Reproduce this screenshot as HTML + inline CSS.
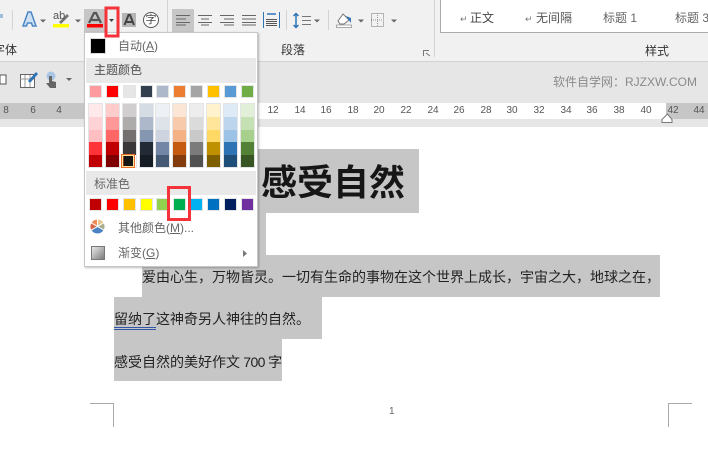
<!DOCTYPE html>
<html><head><meta charset="utf-8">
<style>
html,body{margin:0;padding:0;background:#fff}
#r{position:relative;width:708px;height:465px;overflow:hidden;background:#fff;font-family:"Liberation Sans","Noto Sans CJK SC",sans-serif;color:#333}
#r div{position:absolute;box-sizing:border-box}
.t{white-space:nowrap;line-height:16px;height:16px}
.n{font-size:10px;color:#555;line-height:12px;height:12px;top:105px;width:20px;text-align:center;font-family:"Liberation Sans",sans-serif}
.m{font-size:12px;color:#666;white-space:nowrap;line-height:16px;height:16px}
.d{font-size:14px;color:#222;white-space:nowrap;line-height:20px;height:20px}
.g{background:#c6c6c6}
svg{position:absolute;left:0;top:0}
</style></head><body><div id="r">
<div style="left:0;top:0;width:708px;height:61px;background:#f1f1f1"></div>
<div style="left:0;top:61px;width:708px;height:1px;background:#d2d2d2"></div>
<div style="left:0;top:62px;width:708px;height:65px;background:#e6e6e6"></div>
<div style="left:0;top:103px;width:708px;height:16px;background:#fff"></div>
<div class="g" style="left:0;top:103px;width:114px;height:16px"></div>
<div class="g" style="left:666px;top:103px;width:42px;height:16px"></div>
<div style="left:440px;top:0;width:268px;height:33px;background:#fff;border-left:1px solid #ababab;border-bottom:1px solid #ababab"></div>

<div class="g" style="left:84px;top:9px;width:21px;height:23px"></div>
<div class="g" style="left:172px;top:9px;width:22px;height:23px"></div>

<svg width="708" height="127" viewBox="0 0 708 127">
<g fill="none" stroke="#d4d4d4"><path d="M12.5 10V30M167.5 0V57M286.5 10V30M328.5 10V30M434.5 0V57"/></g>
<path d="M0 15H3M0 17H3" stroke="#4a86c5" fill="none"/>
<path d="M23 26L28 12H31L36 26H32.500L31.500 23H27.500L26.500 26Z" fill="#cfe0f2" stroke="#4c86c6" stroke-width="1.500"/>
<path d="M40 19.500h6l-3 3zM75 19.500h6l-3 3z" fill="#666"/>
<path d="M59 22L67 14L69 16L61 24Z" fill="#777"/><rect x="53" y="24" width="16" height="3.500" fill="#ff0"/>
<path d="M89 23L94 13H96L101 23M91.500 20H98.500" fill="none" stroke="#555" stroke-width="2.200"/><rect x="87" y="24" width="16" height="3.500" fill="#f00"/>
<rect x="122" y="13" width="14" height="14" fill="#b5b5b5"/><path d="M124.500 25L128.500 15H130L134 25M126 22H132.500" fill="none" stroke="#444" stroke-width="2"/>
<circle cx="151" cy="20" r="7.500" fill="#fff" stroke="#555"/>
<path d="M176 15.500H190M176 19H186M176 22.500H190M176 25H186" stroke="#666" fill="none"/>
<path d="M198 15.500H212M201 19H209M198 22.500H212M201 25H209" stroke="#666" fill="none"/>
<path d="M220 15.500H234M224 19H234M220 22.500H234M224 25H234" stroke="#666" fill="none"/>
<path d="M242 15.500H256M242 19H256M242 22.500H256M242 25H256" stroke="#666" fill="none"/>
<path d="M263.500 12V28M279.500 12V28" stroke="#2e75b6" fill="none"/><path d="M267 14H276" stroke="#2e75b6" stroke-width="1.500"/>
<path d="M266 19.500H277M266 21.500H277M266 23.500H277M266 25.500H277" stroke="#555"/>
<path d="M296 14V27M293.500 16L296 13.500L298.500 16M293.500 25L296 27.500L298.500 25" fill="none" stroke="#2e75b6" stroke-width="1.500"/>
<path d="M302 16.500H311M302 20.500H311M302 24.500H311" stroke="#777"/>
<path d="M314 19.500h6l-3 3z" fill="#666"/>
<path d="M338 21L343 14L349 20L344 24H340Z" fill="#fff" stroke="#777"/><path d="M346 16L351 18L351 23Z" fill="#2e75b6"/><rect x="336.500" y="25" width="15" height="2.500" fill="#fff" stroke="#888" stroke-width=".7"/>
<path d="M358 19.500h6l-3 3zM391 19.500h6l-3 3z" fill="#666"/>
<rect x="371.500" y="13.500" width="12" height="13" fill="none" stroke="#777" stroke-dasharray="1 1"/><path d="M371 20H384M377.500 13V27" stroke="#999" stroke-dasharray="1 1"/>
<path d="M423.500 56V50.500H429M426 53L430 56" stroke="#777" fill="none"/>
<rect x="0" y="75" width="6" height="9" fill="#fff" stroke="#555"/>
<rect x="20.500" y="74.500" width="14" height="13" fill="#fff" stroke="#666"/><path d="M20 79H34M25 75V87M30 75V87" stroke="#999"/><path d="M28 81L36 72L38 74L30 83Z" fill="#2e75b6"/>
<circle cx="51" cy="76" r="4.500" fill="#a9c6e6"/><path d="M49 76H52V81L56 82V88H50L46 83L49 83Z" fill="#666"/>
<path d="M66 78h6l-3 3z" fill="#666"/>
<path d="M667.500 114L662 119.500V122.500H672V119.500Z" fill="#fff" stroke="#777"/>
</svg>

<div class="t" style="left:-7px;top:42px;font-size:12px;color:#333">字体</div>
<div class="t" style="left:281px;top:42px;font-size:12px">段落</div>
<div class="t" style="left:645px;top:43px;font-size:12px">样式</div>
<div class="t" style="left:470px;top:10px;font-size:12px;color:#444">正文</div>
<div class="t" style="left:536px;top:10px;font-size:12px;color:#555">无间隔</div>
<div class="t" style="left:603px;top:10px;font-size:12px;color:#666">标题 1</div>
<div class="t" style="left:675px;top:10px;font-size:12px;color:#666">标题 3</div>
<div class="t" style="left:460px;top:11px;font-size:9px;color:#777">↵</div>
<div class="t" style="left:525px;top:11px;font-size:9px;color:#777">↵</div>
<div class="t" style="left:53px;top:8px;font-size:11px;color:#555">ab</div>
<div class="t" style="left:145.500px;top:12px;font-size:11px;color:#444">字</div>
<div class="t" style="left:553px;top:74px;font-size:12px;color:#8a8a8a">软件自学网：RJZXW.COM</div>

<div class="n" style="left:-4px">8</div><div class="n" style="left:23px">6</div><div class="n" style="left:49px">4</div>
<div class="n" style="left:263px">12</div><div class="n" style="left:290px">14</div><div class="n" style="left:316px">16</div><div class="n" style="left:343px">18</div><div class="n" style="left:369px">20</div><div class="n" style="left:396px">22</div><div class="n" style="left:423px">24</div><div class="n" style="left:449px">26</div><div class="n" style="left:476px">28</div><div class="n" style="left:502px">30</div><div class="n" style="left:529px">32</div><div class="n" style="left:556px">34</div><div class="n" style="left:582px">36</div><div class="n" style="left:609px">38</div><div class="n" style="left:636px">40</div><div class="n" style="left:663px">42</div><div class="n" style="left:689px">44</div>

<div class="g" style="left:168px;top:149px;width:251px;height:64px"></div>
<div class="g" style="left:114px;top:213px;width:152px;height:42px"></div>
<div class="g" style="left:142px;top:255px;width:518px;height:42px"></div>
<div class="g" style="left:114px;top:297px;width:208px;height:42px"></div>
<div class="g" style="left:114px;top:339px;width:168px;height:42px"></div>
<div class="t" style="left:261px;top:160px;height:46px;line-height:46px;font-size:36px;font-weight:bold;color:#161616">感受自然</div>
<div class="d" style="left:142px;top:267px">爱由心生，万物皆灵。一切有生命的事物在这个世界上成长，宇宙之大，地球之在，</div>
<div class="d" style="left:114px;top:309px">留纳了这神奇另人神往的自然。</div>
<div class="d" style="left:114px;top:352px">感受自然的美好作文<span style="letter-spacing:-.6px"> 700 </span>字</div>
<div style="left:114px;top:327px;width:42px;height:3px;border-top:1px solid #2f55a4;border-bottom:1px solid #2f55a4"></div>

<div style="left:90px;top:403px;width:24px;height:24px;border-right:1px solid #aaa;border-top:1px solid #aaa"></div>
<div style="left:668px;top:403px;width:24px;height:24px;border-left:1px solid #aaa;border-top:1px solid #aaa"></div>
<div class="t" style="left:389px;top:404px;font-size:10px;color:#666">1</div>

<div style="left:84px;top:32px;width:174px;height:235px;background:#fff;border:1px solid #c6c6c6;box-shadow:1px 1px 2px rgba(0,0,0,.25)"></div>
<div style="left:90px;top:38px;width:16px;height:16px;background:#000;border:1px solid #ddd"></div>
<div class="m" style="left:118px;top:38px">自动(<u>A</u>)</div>
<div style="left:86px;top:58px;width:170px;height:25px;background:#e9e9e9"></div>
<div class="m" style="left:94px;top:62px;font-weight:500">主题颜色</div>
<div style="left:86px;top:171px;width:170px;height:24px;background:#e9e9e9"></div>
<div class="m" style="left:94px;top:176px">标准色</div>
<div class="m" style="left:118px;top:220px">其他颜色(<u>M</u>)...</div>
<div class="m" style="left:118px;top:245px">渐变(<u>G</u>)</div>

<svg width="708" height="465" viewBox="0 0 708 465">
<defs><linearGradient id="gr" x1="0" y1="0" x2="1" y2="1"><stop offset="0" stop-color="#eee"/><stop offset="1" stop-color="#777"/></linearGradient></defs>
<g stroke="#e2e4e6" stroke-width="1">
<rect x="89.500" y="85.500" width="12" height="12" fill="#ff9a9e"/><rect x="106.500" y="85.500" width="12" height="12" fill="#f00"/><rect x="123.500" y="85.500" width="12" height="12" fill="#e7e6e6"/><rect x="140.500" y="85.500" width="12" height="12" fill="#323f4f"/><rect x="156.500" y="85.500" width="12" height="12" fill="#adb9ca"/><rect x="173.500" y="85.500" width="12" height="12" fill="#ed7d31"/><rect x="190.500" y="85.500" width="12" height="12" fill="#a5a5a5"/><rect x="207.500" y="85.500" width="12" height="12" fill="#ffc000"/><rect x="224.500" y="85.500" width="12" height="12" fill="#5b9bd5"/><rect x="241.500" y="85.500" width="12" height="12" fill="#70ad47"/>
<rect x="89.500" y="198.500" width="12" height="12" fill="#c00000"/><rect x="106.500" y="198.500" width="12" height="12" fill="#f00"/><rect x="123.500" y="198.500" width="12" height="12" fill="#ffc000"/><rect x="140.500" y="198.500" width="12" height="12" fill="#ff0"/><rect x="156.500" y="198.500" width="12" height="12" fill="#92d050"/><rect x="173.500" y="198.500" width="12" height="12" fill="#00b050"/><rect x="190.500" y="198.500" width="12" height="12" fill="#00b0f0"/><rect x="207.500" y="198.500" width="12" height="12" fill="#0070c0"/><rect x="224.500" y="198.500" width="12" height="12" fill="#002060"/><rect x="241.500" y="198.500" width="12" height="12" fill="#7030a0"/>
<rect x="88.500" y="103.500" width="14" height="64" fill="#fff"/><rect x="105.500" y="103.500" width="14" height="64" fill="#fff"/><rect x="122.500" y="103.500" width="14" height="64" fill="#fff"/><rect x="139.500" y="103.500" width="14" height="64" fill="#fff"/><rect x="155.500" y="103.500" width="14" height="64" fill="#fff"/><rect x="172.500" y="103.500" width="14" height="64" fill="#fff"/><rect x="189.500" y="103.500" width="14" height="64" fill="#fff"/><rect x="206.500" y="103.500" width="14" height="64" fill="#fff"/><rect x="223.500" y="103.500" width="14" height="64" fill="#fff"/><rect x="240.500" y="103.500" width="14" height="64" fill="#fff"/>
</g>
<g>
<rect x="89" y="104" width="13" height="13" fill="#ffe9ea"/><rect x="89" y="117" width="13" height="13" fill="#ffd2d5"/><rect x="89" y="130" width="13" height="13" fill="#ffbfc2"/><rect x="89" y="142" width="13" height="13" fill="#ff3338"/><rect x="89" y="155" width="13" height="12" fill="#c00000"/>
<rect x="106" y="104" width="13" height="13" fill="#ffcccc"/><rect x="106" y="117" width="13" height="13" fill="#ff9999"/><rect x="106" y="130" width="13" height="13" fill="#ff6666"/><rect x="106" y="142" width="13" height="13" fill="#c00000"/><rect x="106" y="155" width="13" height="12" fill="#7f0000"/>
<rect x="123" y="104" width="13" height="13" fill="#d0cece"/><rect x="123" y="117" width="13" height="13" fill="#aeabab"/><rect x="123" y="130" width="13" height="13" fill="#757070"/><rect x="123" y="142" width="13" height="13" fill="#3a3838"/><rect x="123" y="155.500" width="11.500" height="11.500" fill="#171616" stroke="#f2642a"/>
<rect x="140" y="104" width="13" height="13" fill="#d6dce4"/><rect x="140" y="117" width="13" height="13" fill="#adb9ca"/><rect x="140" y="130" width="13" height="13" fill="#8496b0"/><rect x="140" y="142" width="13" height="13" fill="#222a35"/><rect x="140" y="155" width="13" height="12" fill="#161c24"/>
<rect x="156" y="104" width="13" height="13" fill="#edf0f4"/><rect x="156" y="117" width="13" height="13" fill="#dee3ea"/><rect x="156" y="130" width="13" height="13" fill="#cdd4df"/><rect x="156" y="142" width="13" height="13" fill="#7386a5"/><rect x="156" y="155" width="13" height="12" fill="#465a76"/>
<rect x="173" y="104" width="13" height="13" fill="#fbe5d5"/><rect x="173" y="117" width="13" height="13" fill="#f7caac"/><rect x="173" y="130" width="13" height="13" fill="#f4b183"/><rect x="173" y="142" width="13" height="13" fill="#c55a11"/><rect x="173" y="155" width="13" height="12" fill="#833c0b"/>
<rect x="190" y="104" width="13" height="13" fill="#ededed"/><rect x="190" y="117" width="13" height="13" fill="#dbdbdb"/><rect x="190" y="130" width="13" height="13" fill="#c9c9c9"/><rect x="190" y="142" width="13" height="13" fill="#7b7b7b"/><rect x="190" y="155" width="13" height="12" fill="#525252"/>
<rect x="207" y="104" width="13" height="13" fill="#fff2cc"/><rect x="207" y="117" width="13" height="13" fill="#fee599"/><rect x="207" y="130" width="13" height="13" fill="#ffd965"/><rect x="207" y="142" width="13" height="13" fill="#bf9000"/><rect x="207" y="155" width="13" height="12" fill="#7f6000"/>
<rect x="224" y="104" width="13" height="13" fill="#deeaf6"/><rect x="224" y="117" width="13" height="13" fill="#bdd6ee"/><rect x="224" y="130" width="13" height="13" fill="#9cc2e5"/><rect x="224" y="142" width="13" height="13" fill="#2e74b5"/><rect x="224" y="155" width="13" height="12" fill="#1f4e79"/>
<rect x="241" y="104" width="13" height="13" fill="#e2efd9"/><rect x="241" y="117" width="13" height="13" fill="#c5e0b3"/><rect x="241" y="130" width="13" height="13" fill="#a8d08d"/><rect x="241" y="142" width="13" height="13" fill="#538135"/><rect x="241" y="155" width="13" height="12" fill="#375623"/>
</g>
<rect x="121.500" y="154.500" width="13" height="13" fill="none" stroke="#ee6c2c"/><rect x="122.500" y="155.500" width="11" height="11" fill="none" stroke="#ffe294"/>
<g stroke="#fff" stroke-width="1">
<path d="M97.500 226.500L97.500 219A7.500 7.500 0 0 0 91 222.750Z" fill="#ee8a55"/>
<path d="M97.500 226.500L97.500 219A7.500 7.500 0 0 1 104 222.750Z" fill="#e6c88f"/>
<path d="M97.500 226.500L104 222.750A7.500 7.500 0 0 1 104 230.250Z" fill="#a9ad8c"/>
<path d="M97.500 226.500L104 230.250A7.500 7.500 0 0 1 91 230.250Z" fill="#4a82c4"/>
<path d="M97.500 226.500L91 230.250A7.500 7.500 0 0 1 91 222.750Z" fill="#d8674a"/>
</g>
<rect x="91.500" y="246.500" width="13" height="13" fill="url(#gr)" stroke="#777"/>
<path d="M243 250L247 253.500L243 257Z" fill="#777"/>
<rect x="106" y="8" width="12" height="28" fill="none" stroke="#f5333b" stroke-width="3"/>
<rect x="168.500" y="187.500" width="21" height="32" fill="none" stroke="#f5333b" stroke-width="3"/>
<path d="M109 19h5l-2.500 3z" fill="#444"/>
</svg>
</div></body></html>
